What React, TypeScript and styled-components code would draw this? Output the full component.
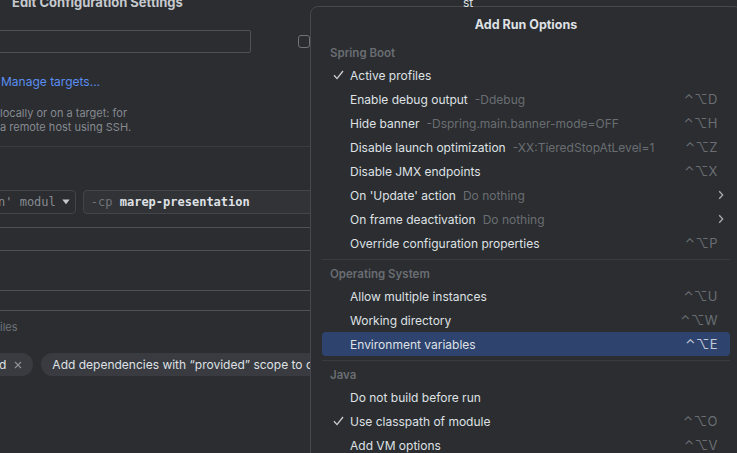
import React from "react";
import styled, { createGlobalStyle } from "styled-components";

const Global = createGlobalStyle`
  html, body { margin: 0; padding: 0; background: #2b2d30; overflow: hidden; }
  #root { width: 737px; height: 453px; }
`;

const UI = `Inter, "DejaVu Sans", sans-serif`;
const MONO = `"DejaVu Sans Mono", "Liberation Mono", monospace`;

const Page = styled.div`
  position: relative;
  display: flex;
  width: 737px;
  height: 453px;
  overflow: hidden;
  background: #2b2d30;
  font-family: ${UI};
  -webkit-font-smoothing: antialiased;
`;

const LeftPanel = styled.div`
  flex-shrink: 0;
  width: 310px;
  height: 453px;
  overflow: hidden;
  display: flex;
  flex-direction: column;
`;

const DialogTitle = styled.div`
  margin: -6px 0 0 12px;
  line-height: 16px;
  font-size: 13px;
  font-weight: 700;
  color: #c6c9ce;
  white-space: nowrap;
`;

const InputRow = styled.div`
  margin-top: 20px;
  height: 23px;
  display: flex;
  align-items: center;
`;

const TextField = styled.div<{ $w?: number; $h?: number }>`
  flex-shrink: 0;
  width: ${(p) => (p.$w ? `${p.$w}px` : "auto")};
  height: ${(p) => p.$h ?? 23}px;
  box-sizing: border-box;
  border: 1px solid #4e5157;
  border-radius: 2px;
`;

const NameField = styled(TextField)`
  margin-left: -10px;
`;

const CheckBox = styled.div`
  margin-left: 47px;
  width: 13px;
  height: 13px;
  box-sizing: border-box;
  border: 1px solid #6f737a;
  border-radius: 3px;
`;

const Link = styled.div`
  margin: 21px 0 0 1px;
  line-height: 16px;
  font-size: 12px;
  color: #5a8ef2;
  white-space: nowrap;
`;

const Description = styled.div`
  margin-top: 16px;
  font-size: 11px;
  line-height: 14px;
  color: #868a91;
  white-space: nowrap;
`;

const Divider = styled.div`
  margin-top: 12px;
  height: 1px;
  background: #393b40;
`;

const CommandRow = styled.div`
  margin-top: 43px;
  height: 24px;
  display: flex;
  gap: 7px;
`;

const Dropdown = styled.div`
  flex-shrink: 0;
  margin-left: -10px;
  padding: 0 5px 0 7px;
  box-sizing: border-box;
  height: 24px;
  display: flex;
  align-items: center;
  gap: 6px;
  border: 1px solid #43454a;
  border-radius: 4px;
  font-family: ${MONO};
  font-size: 12px;
  color: #868a91;
  white-space: nowrap;
`;

const ClasspathField = styled.div`
  flex: 1;
  margin-right: -12px;
  height: 24px;
  box-sizing: border-box;
  display: flex;
  align-items: center;
  padding-left: 7px;
  background: #313337;
  border: 1px solid #43454a;
  border-radius: 4px;
  font-family: ${MONO};
  font-size: 12px;
  white-space: nowrap;
`;

const Muted = styled.span`
  color: #6f737a;
`;

const Strong = styled.span`
  color: #dfe1e5;
  font-weight: 600;
`;

const WideField = styled(TextField)<{ $top: number }>`
  margin: ${(p) => p.$top}px -10px 0 -10px;
  border-radius: 0;
`;

const Caption = styled.div`
  margin-top: 9px;
  line-height: 14px;
  font-size: 11px;
  color: #6f737a;
  white-space: nowrap;
`;

const ChipRow = styled.div`
  margin-top: 19px;
  display: flex;
  gap: 8px;
  white-space: nowrap;
`;

const Chip = styled.div<{ $offset?: number }>`
  flex-shrink: 0;
  margin-left: ${(p) => p.$offset ?? 0}px;
  height: 23px;
  padding: 0 11px;
  display: flex;
  align-items: center;
  gap: 8px;
  border-radius: 12px;
  background: #393b40;
  color: #dfe1e5;
  font-size: 12px;
`;

const Popup = styled.div`
  flex-shrink: 0;
  width: 432px;
  height: 470px;
  margin-top: 6px;
  box-sizing: border-box;
  padding: 0 11px;
  border: 1px solid #46484d;
  border-radius: 8px;
  background: #2b2d30;
  display: flex;
  flex-direction: column;
`;

const PopupTitle = styled.div`
  padding: 9px 0;
  line-height: 18px;
  text-align: center;
  font-size: 12.5px;
  font-weight: 700;
  color: #dfe1e5;
`;

const SectionHeader = styled.div`
  height: 20px;
  line-height: 21px;
  padding-left: 8px;
  font-size: 11.5px;
  font-weight: 600;
  color: #6a6d73;
`;

const SectionLine = styled.div`
  height: 1px;
  margin: 4px 0;
  background: #393b40;
`;

const Row = styled.div<{ $selected?: boolean }>`
  flex-shrink: 0;
  height: 24px;
  display: flex;
  align-items: center;
  padding: 0 12px 0 11px;
  border-radius: 4px;
  background: ${(p) => (p.$selected ? "#2e436e" : "transparent")};
  white-space: nowrap;
  font-size: 12px;
`;

const CheckCell = styled.div`
  width: 17px;
  flex-shrink: 0;
  display: flex;
  align-items: center;
`;

const Label = styled.span`
  color: #dfe1e5;
`;

const Hint = styled.span`
  margin-left: 7px;
  color: #6a6d73;
`;

const Spacer = styled.div`
  flex: 1;
`;

const Shortcut = styled.span<{ $selected?: boolean }>`
  color: ${(p) => (p.$selected ? "#c3c9d6" : "#6a6d73")};
  font-size: 13px;
  letter-spacing: 0.5px;
`;

const ChevronCell = styled.div`
  margin-right: -6px;
  display: flex;
  align-items: center;
`;

const Peek = styled.div`
  position: absolute;
  left: 463px;
  top: -5px;
  font-size: 12px;
  color: #dfe1e5;
`;

const Check = () => (
  <svg width="11" height="10" viewBox="0 0 11 10">
    <path d="M1 5.2 L4 8.6 L10 1" fill="none" stroke="#cfd1d5" strokeWidth="1.3" />
  </svg>
);

const Chevron = () => (
  <svg width="6" height="10" viewBox="0 0 6 10">
    <path d="M1.2 1.2 L4.7 5 L1.2 8.8" fill="none" stroke="#a9acb1" strokeWidth="1.3" />
  </svg>
);

const Caret = () => (
  <svg width="8" height="6" viewBox="0 0 8 6">
    <path d="M0.3 0.5 H7.7 L4 5.3 Z" fill="#c5c8cd" />
  </svg>
);

const Close = () => (
  <svg width="8" height="8" viewBox="0 0 8 8">
    <path d="M1 1 L7 7 M7 1 L1 7" stroke="#8c8f94" strokeWidth="1.2" />
  </svg>
);

type Item = {
  label: string;
  hint?: string;
  shortcut?: string;
  checked?: boolean;
  submenu?: boolean;
  selected?: boolean;
};

type Section = { title: string; items: Item[] };

const sections: Section[] = [
  {
    title: "Spring Boot",
    items: [
      { label: "Active profiles", checked: true },
      { label: "Enable debug output", hint: "-Ddebug", shortcut: "⌃⌥D" },
      { label: "Hide banner", hint: "-Dspring.main.banner-mode=OFF", shortcut: "⌃⌥H" },
      { label: "Disable launch optimization", hint: "-XX:TieredStopAtLevel=1", shortcut: "⌃⌥Z" },
      { label: "Disable JMX endpoints", shortcut: "⌃⌥X" },
      { label: "On 'Update' action", hint: "Do nothing", submenu: true },
      { label: "On frame deactivation", hint: "Do nothing", submenu: true },
      { label: "Override configuration properties", shortcut: "⌃⌥P" },
    ],
  },
  {
    title: "Operating System",
    items: [
      { label: "Allow multiple instances", shortcut: "⌃⌥U" },
      { label: "Working directory", shortcut: "⌃⌥W" },
      { label: "Environment variables", shortcut: "⌃⌥E", selected: true },
    ],
  },
  {
    title: "Java",
    items: [
      { label: "Do not build before run" },
      { label: "Use classpath of module", shortcut: "⌃⌥O", checked: true },
      { label: "Add VM options", shortcut: "⌃⌥V" },
    ],
  },
];

export default function App() {
  return (
    <>
      <Global />
      <Page>
        <LeftPanel>
          <DialogTitle>Edit Configuration Settings</DialogTitle>
          <InputRow>
            <NameField $w={261} />
            <CheckBox />
          </InputRow>
          <Link>Manage targets...</Link>
          <Description>
            locally or on a target: for
            <br />a remote host using SSH.
          </Description>
          <Divider />
          <CommandRow>
            <Dropdown>
              n' modul
              <Caret />
            </Dropdown>
            <ClasspathField>
              <Muted>-cp&nbsp;</Muted>
              <Strong>marep-presentation</Strong>
            </ClasspathField>
          </CommandRow>
          <WideField $top={13} $h={24} />
          <WideField $top={39} $h={21} />
          <Caption>iles</Caption>
          <ChipRow>
            <Chip $offset={-12}>
              d
              <Close />
            </Chip>
            <Chip>Add dependencies with “provided” scope to classpath</Chip>
          </ChipRow>
        </LeftPanel>
        <Popup>
          <PopupTitle>Add Run Options</PopupTitle>
          {sections.map((s, i) => (
            <React.Fragment key={s.title}>
              {i > 0 && <SectionLine />}
              <SectionHeader>{s.title}</SectionHeader>
              {s.items.map((it) => (
                <Row key={it.label} $selected={it.selected}>
                  <CheckCell>{it.checked && <Check />}</CheckCell>
                  <Label>{it.label}</Label>
                  {it.hint && <Hint>{it.hint}</Hint>}
                  <Spacer />
                  {it.shortcut && <Shortcut $selected={it.selected}>{it.shortcut}</Shortcut>}
                  {it.submenu && (
                    <ChevronCell>
                      <Chevron />
                    </ChevronCell>
                  )}
                </Row>
              ))}
            </React.Fragment>
          ))}
        </Popup>
        <Peek>st</Peek>
      </Page>
    </>
  );
}
